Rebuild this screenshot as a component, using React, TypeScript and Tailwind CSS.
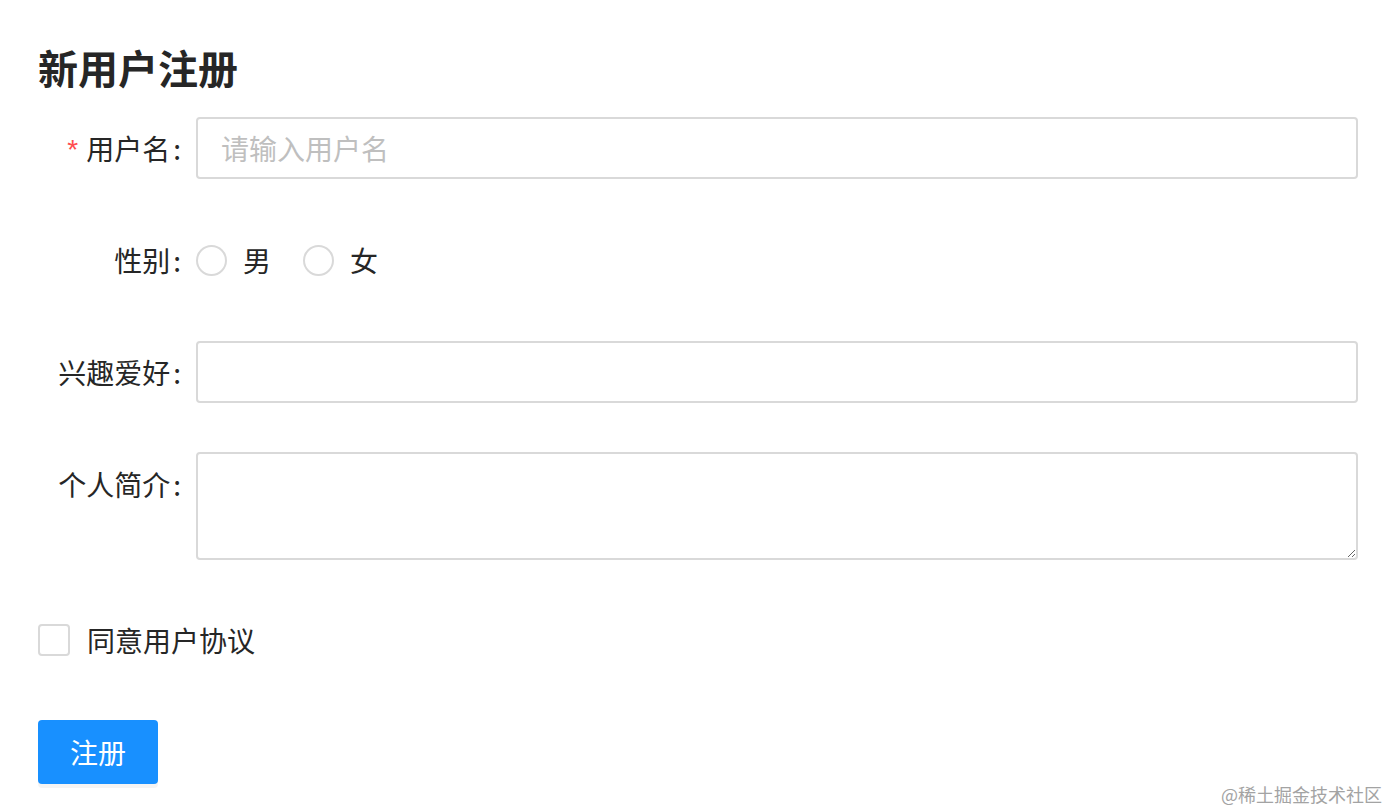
import React from 'react';

const FONT = { fontFamily: '"Noto Sans CJK SC", "Noto Sans", sans-serif' };

const Label: React.FC<{ text: string; required?: boolean; top?: boolean }> = ({ text, required, top }) => (
  <div className={`w-[158px] shrink-0 flex justify-end text-[28px] text-[#262626] ${top ? 'h-[64px] items-center self-start' : 'items-center'}`}>
    {required && <span className="text-[#ff4d4f] text-[28px] mr-[8px] mt-[4px]" style={{ fontFamily: '"Liberation Sans", sans-serif' }}>*</span>}
    <span>{text}</span>
    <span className="ml-[3px] mr-[15px]">:</span>
  </div>
);

const Radio: React.FC<{ label: string }> = ({ label }) => (
  <label className="flex items-center mr-[16px]">
    <span className="w-[31px] h-[31px] rounded-full border-2 border-[#d9d9d9] bg-white" />
    <span className="px-[16px] text-[28px] text-[#262626]">{label}</span>
  </label>
);

export default function App() {
  return (
    <div className="relative w-[1390px] h-[810px] bg-white pl-[38px] pr-[32px] pt-[39px]" style={FONT}>
      <h1 className="text-[40px] font-bold leading-[56px] text-[#262626] mb-[21px]">新用户注册</h1>

      <div className="flex items-center h-[64px] mb-[48px]">
        <Label text="用户名" required />
        <input
          placeholder="请输入用户名"
          className="flex-1 h-[62px] border-2 border-[#d9d9d9] rounded-[4px] px-[23px] text-[28px] text-[#262626] placeholder:text-[#bfbfbf] outline-none"
        />
      </div>

      <div className="flex items-center h-[64px] mb-[48px]">
        <Label text="性别" />
        <Radio label="男" />
        <Radio label="女" />
      </div>

      <div className="flex items-center h-[64px] mb-[48px]">
        <Label text="兴趣爱好" />
        <input className="flex-1 h-[62px] border-2 border-[#d9d9d9] rounded-[4px] px-[23px] text-[28px] outline-none" />
      </div>

      <div className="flex items-start mb-[48px]">
        <Label text="个人简介" top />
        <textarea className="flex-1 h-[108px] border-2 border-[#d9d9d9] rounded-[4px] px-[23px] py-[8px] text-[28px] outline-none resize-y" />
      </div>

      <div className="flex items-center h-[64px] mb-[48px]">
        <span className="w-[32px] h-[32px] border-2 border-[#d9d9d9] rounded-[4px] bg-white" />
        <span className="pl-[17px] text-[28px] text-[#262626]">同意用户协议</span>
      </div>

      <button className="w-[120px] h-[64px] bg-[#1890ff] rounded-[4px] text-white text-[28px] shadow-[0_4px_0_rgba(0,0,0,0.045)]">
        注册
      </button>

      <div className="absolute right-[8px] bottom-[5px] text-[18px] text-[#a3a3a3] leading-[22px]">@稀土掘金技术社区</div>
    </div>
  );
}
